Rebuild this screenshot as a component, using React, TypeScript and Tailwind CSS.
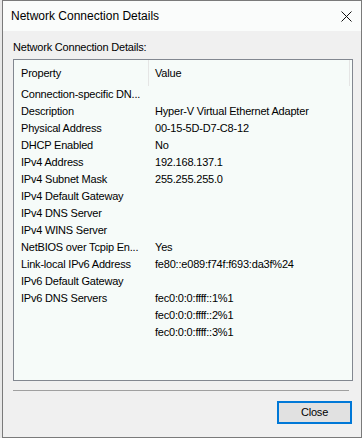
const rows: [string, string][] = [
  ["Connection-specific DN...", ""],
  ["Description", "Hyper-V Virtual Ethernet Adapter"],
  ["Physical Address", "00-15-5D-D7-C8-12"],
  ["DHCP Enabled", "No"],
  ["IPv4 Address", "192.168.137.1"],
  ["IPv4 Subnet Mask", "255.255.255.0"],
  ["IPv4 Default Gateway", ""],
  ["IPv4 DNS Server", ""],
  ["IPv4 WINS Server", ""],
  ["NetBIOS over Tcpip En...", "Yes"],
  ["Link-local IPv6 Address", "fe80::e089:f74f:f693:da3f%24"],
  ["IPv6 Default Gateway", ""],
  ["IPv6 DNS Servers", "fec0:0:0:ffff::1%1"],
  ["", "fec0:0:0:ffff::2%1"],
  ["", "fec0:0:0:ffff::3%1"],
];

export default function App() {
  return (
    <div className="h-[438px] w-[362px] bg-[#e8e8e8] pl-[2px] font-['Liberation_Sans',Arial,sans-serif] text-[11px] tracking-[-0.2px] text-black">
      <div className="flex h-[438px] w-[360px] flex-col border border-[#7a7a7a] bg-[#f0f0f0]">
        {/* Title bar */}
        <div className="flex h-[30px] items-center justify-between bg-[#fafcfb] pl-[8px] pr-[9px]">
          <span className="text-[12px] leading-none tracking-normal">Network Connection Details</span>
          <svg width="11" height="11" viewBox="0 0 11 11" className="mt-[1px]">
            <path d="M0.5 0.5L10.5 10.5M10.5 0.5L0.5 10.5" stroke="#111" strokeWidth="1" />
          </svg>
        </div>

        <div className="flex flex-1 flex-col px-[10px]">
          <div className="mt-[8px] h-[17px] leading-[17px]">Network Connection Details:</div>

          {/* List view */}
          <div className="mt-[3px] h-[322px] w-[340px] border border-[#828790] bg-[#f6fbf9]">
            <div className="flex h-[26px] items-center">
              <div className="flex h-full w-[135px] items-center border-r border-[#e5e5e5] pl-[7px]">Property</div>
              <div className="flex h-full w-[201px] items-center border-r border-[#e5e5e5] pl-[6px]">Value</div>
            </div>
            {rows.map(([k, v], i) => (
              <div key={i} className="flex h-[17px] items-center whitespace-nowrap">
                <div className="w-[135px] overflow-hidden pl-[7px]">{k}</div>
                <div className="pl-[6px]">{v}</div>
              </div>
            ))}
          </div>

          <div className="mt-[9px] h-[2px] w-[336px] border-t border-[#a0a0a0] border-b-white" />

          <div className="mt-[9px] flex justify-end">
            <button className="mr-[-1px] h-[23px] w-[75px] border-2 border-[#0078d7] bg-[#e1e1e1] text-[11px] leading-none">
              Close
            </button>
          </div>
        </div>
      </div>
    </div>
  );
}
